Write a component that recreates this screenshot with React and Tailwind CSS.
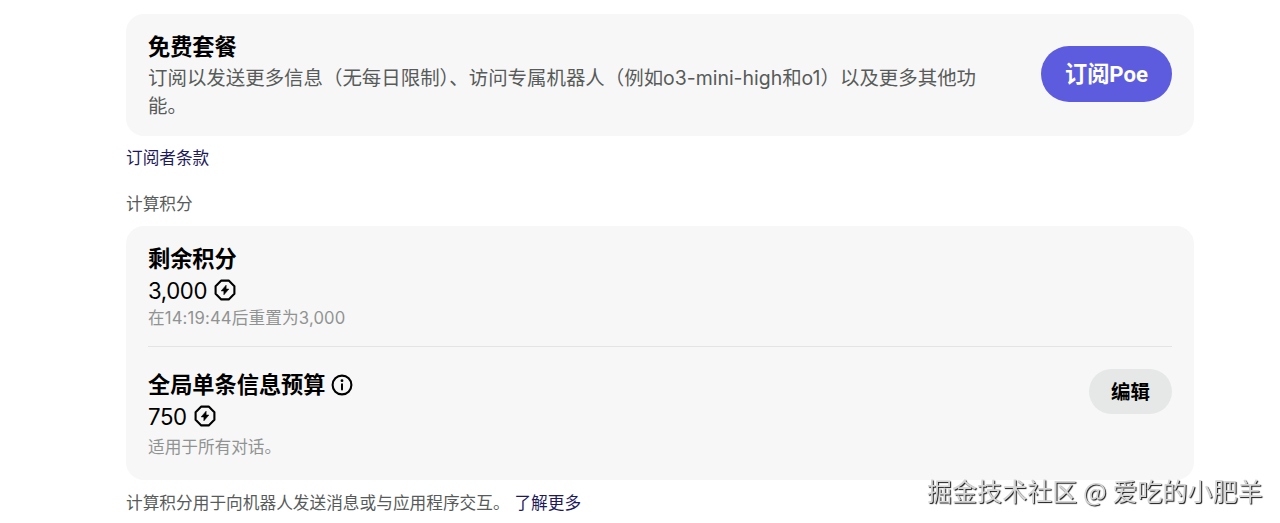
import React from "react";

function PointsIcon() {
  return (
    <svg
      className="h-[22px] w-[22px] shrink-0"
      viewBox="0 0 22 22"
      fill="none"
      stroke="currentColor"
      strokeWidth="2.1"
      strokeLinejoin="round"
    >
      <path d="M7.3 1.6h7.4l5.7 5.7v7.4l-5.7 5.7H7.3l-5.7-5.7V7.3z" />
      <path
        d="M12.1 6.2v3.9h2.7l-4.9 5.7v-3.9H7.2z"
        fill="currentColor"
        strokeWidth="0.6"
      />
    </svg>
  );
}

function InfoIcon() {
  return (
    <svg
      className="h-[22px] w-[22px] shrink-0"
      viewBox="0 0 22 22"
      fill="none"
      stroke="currentColor"
    >
      <circle cx="11" cy="11" r="9.4" strokeWidth="2.1" />
      <path d="M11 10.2v5.2" strokeWidth="2" strokeLinecap="round" />
      <circle cx="11" cy="6.7" r="1.4" fill="currentColor" stroke="none" />
    </svg>
  );
}

function PointsRow({ title, info, value, note, action }) {
  return (
    <div className="flex items-start justify-between">
      <div>
        <h3 className="flex h-[31px] items-center gap-[5px] text-[22.2px] font-bold">
          {title}
          {info && <InfoIcon />}
        </h3>
        <div className="flex h-[31px] items-center gap-[7px] pt-px text-[22.2px]">
          <span className="pt-px tracking-[-0.4px]">{value}</span>
          <PointsIcon />
        </div>
        {note}
      </div>
      {action}
    </div>
  );
}

export default function App() {
  return (
    <div className="relative h-[523px] w-[1280px] overflow-hidden bg-white pt-[14px] pl-[126px] font-['Inter','Noto_Sans_CJK_SC',sans-serif] text-black">
      <main className="w-[1068px]">
        <section className="flex h-[122px] items-start justify-between rounded-[18px] bg-[#f7f7f7] px-[22px] pt-[18px]">
          <div className="w-[840px]">
            <h2 className="text-[22.2px] leading-[30px] font-bold">免费套餐</h2>
            <p className="mt-[2px] text-[19.44px] leading-[28px] text-[#575b5a]">
              订阅以发送更多信息（无每日限制）、访问专属机器人（例如o3-mini-high和o1）以及更多其他功能。
            </p>
          </div>
          <button className="mt-[14px] h-[56px] w-[131px] rounded-full bg-[#5d5cde] pt-0.5 font-['Roboto','Noto_Sans_CJK_SC',sans-serif] text-[22.2px] font-bold text-white">
            订阅Poe
          </button>
        </section>

        <a className="mt-[10px] block text-[16.65px] leading-[24px] text-[#1d1a5c]">
          订阅者条款
        </a>
        <p className="mt-[22px] text-[16.65px] leading-[24px] text-[#575b5a]">
          计算积分
        </p>

        <section className="mt-[10px] h-[254px] rounded-[18px] bg-[#f7f7f7] px-[22px] pt-[17px]">
          <PointsRow
            title="剩余积分"
            value="3,000"
            note={
              <p className="mt-px text-[16.65px] leading-[24px] tracking-[0.15px] text-[#909392]">
                在14:19:44后重置为3,000
              </p>
            }
          />
          <hr className="mt-[16px] mb-[22px] border-[#e3e4e4]" />
          <PointsRow
            title="全局单条信息预算"
            info
            value="750"
            note={
              <p className="mt-[4px] text-[16.65px] leading-[24px] text-[#909392]">
                适用于所有对话。
              </p>
            }
            action={
              <button className="h-[45px] w-[83px] rounded-full bg-[#e5e8e7] pt-[3px] text-[19.44px] font-bold">
                编辑
              </button>
            }
          />
        </section>

        <p className="mt-[11px] text-[16.65px] leading-[24px] tracking-[0.04px] text-[#575b5a]">
          计算积分用于向机器人发送消息或与应用程序交互。{" "}
          <a className="text-[#1d1a5c]">了解更多</a>
        </p>
      </main>

      <div className="absolute top-[472px] left-[927px] font-['Noto_Sans_CJK_SC',sans-serif] text-[25px] leading-[36px] tracking-[0.06px] whitespace-nowrap text-[#d6d6d6] opacity-99 will-change-transform [text-shadow:1px_1px_1px_#111]">
        掘金技术社区 @ 爱吃的小肥羊
      </div>
    </div>
  );
}
